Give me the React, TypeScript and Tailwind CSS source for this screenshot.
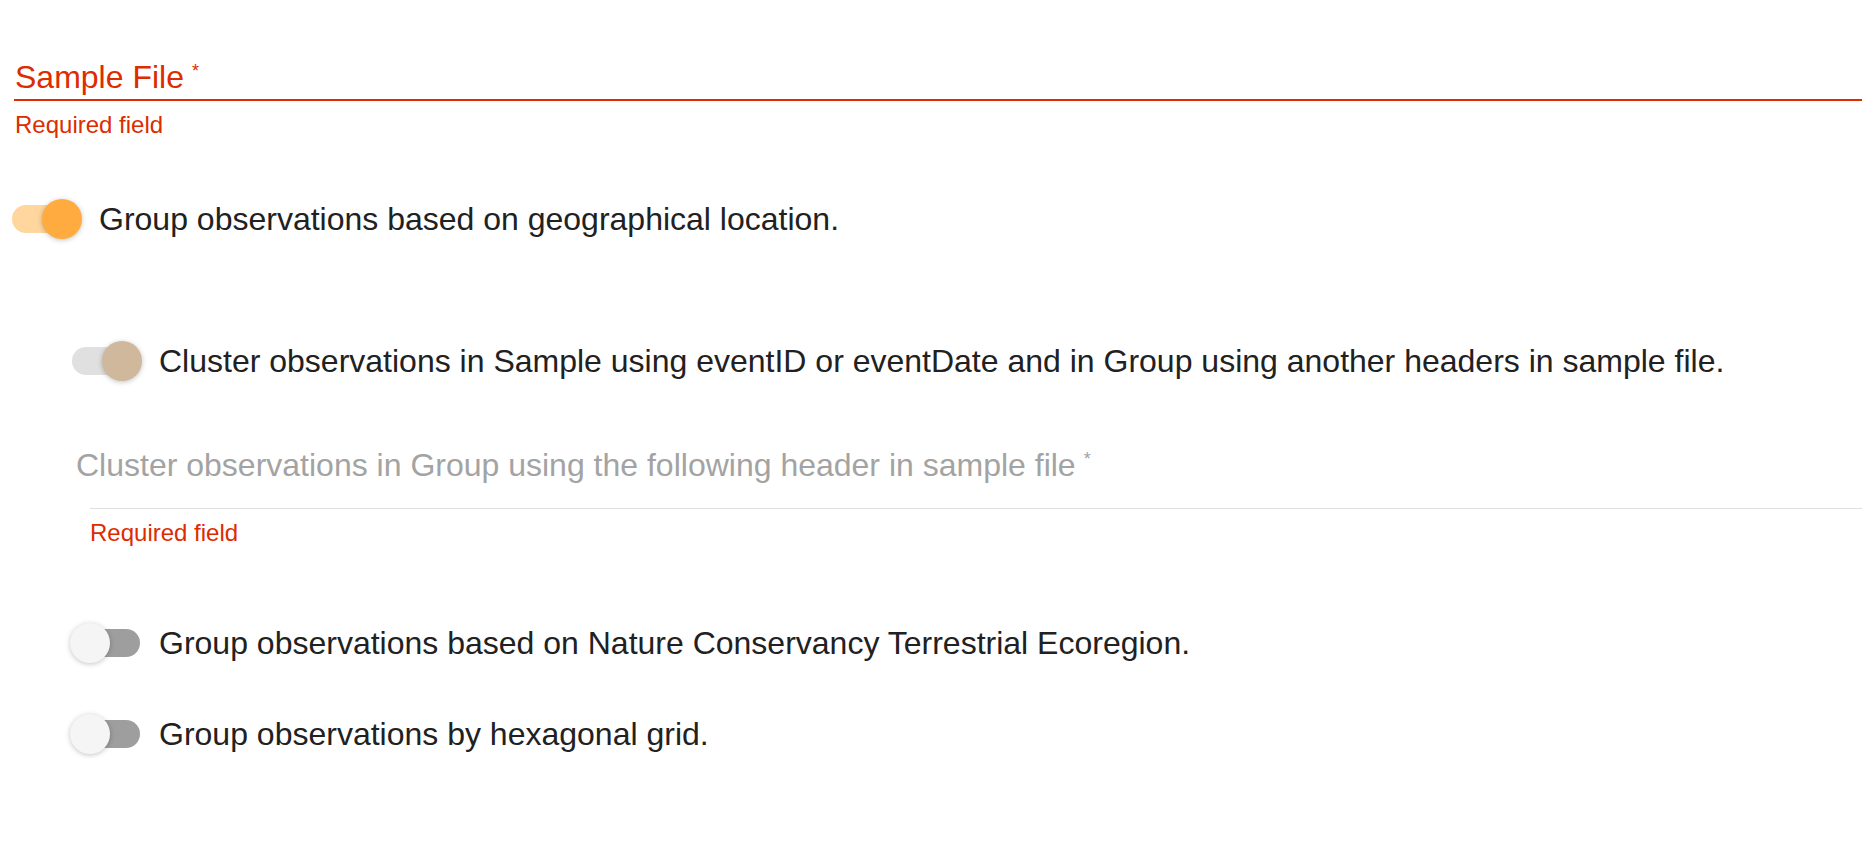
const thumbShadow = 'shadow-[0_1px_6px_rgba(0,0,0,0.12),0_1px_4px_rgba(0,0,0,0.12)]';

type ToggleProps = {
  on?: boolean;
  disabled?: boolean;
  label: string;
};

const Toggle = ({ on = false, disabled = false, label }: ToggleProps) => {
  let track = 'bg-[#9e9e9e]';
  let thumb = 'bg-[#f5f5f5]';
  if (on && !disabled) {
    track = 'bg-[#ffd69e]';
    thumb = 'bg-[#ffab40]';
  } else if (on && disabled) {
    track = 'bg-[#e0e0e0]';
    thumb = 'bg-[#cfb89b]';
  }
  return (
    <div className="flex items-center gap-[17px] h-[40px]">
      <div className="relative w-[72px] h-[40px] flex-shrink-0">
        <div className={`absolute left-[2px] right-[2px] top-[6px] h-[28px] rounded-full ${track}`} />
        <div
          className={`absolute top-0 w-[40px] h-[40px] rounded-full ${thumb} ${thumbShadow} ${on ? 'left-[32px]' : 'left-0'}`}
        />
      </div>
      <span className="text-[32px] leading-[40px] text-[#212121] whitespace-nowrap">{label}</span>
    </div>
  );
};

const Asterisk = () => (
  <span className="inline-block align-top text-[18px] leading-[18px] mt-[5px] ml-[8px]">*</span>
);

const App = () => {
  return (
    <div
      className="w-full h-[848px] bg-white overflow-hidden"
      style={{ fontFamily: '"Liberation Sans", Arial, sans-serif' }}
    >
      {/* Sample file field (error state) */}
      <div className="pl-[14px] pt-[57px]">
        <div className="border-b-2 border-[#dd2c00] pb-[2px]">
          <div className="text-[32px] leading-[40px] text-[#dd2c00] pl-[1px] whitespace-nowrap">
            Sample File
            <Asterisk />
          </div>
        </div>
        <div className="mt-[8px] text-[24px] leading-[32px] text-[#dd2c00] pl-[1px]">Required field</div>
      </div>

      <div className="ml-[10px] mt-[58px]">
        <Toggle on label="Group observations based on geographical location." />
      </div>

      <div className="ml-[70px]">
        <div className="mt-[102px]">
          <Toggle
            on
            disabled
            label="Cluster observations in Sample using eventID or eventDate and in Group using another headers in sample file."
          />
        </div>

        {/* Group header field */}
        <div className="ml-[20px] mt-[64px]">
          <div className="border-b border-[#e0e0e0] pb-[23px]">
            <div className="-ml-[14px] text-[32px] leading-[40px] text-[#a3a3a3] whitespace-nowrap">
              Cluster observations in Group using the following header in sample file
              <Asterisk />
            </div>
          </div>
          <div className="mt-[8px] text-[24px] leading-[32px] text-[#dd2c00]">Required field</div>
        </div>

        <div className="mt-[74px]">
          <Toggle label="Group observations based on Nature Conservancy Terrestrial Ecoregion." />
        </div>
        <div className="mt-[51px]">
          <Toggle label="Group observations by hexagonal grid." />
        </div>
      </div>
    </div>
  );
};

export default App;
